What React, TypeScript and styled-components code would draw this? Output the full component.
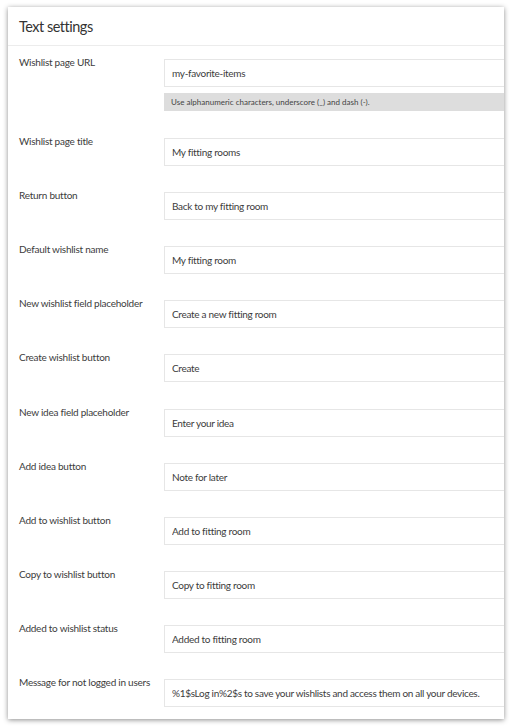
import React from "react"
import styled, { createGlobalStyle } from "styled-components"

const GlobalStyle = createGlobalStyle`
    html, body {
        margin: 0;
        padding: 0;
        background: #ffffff;
    }
    body {
        font-family: Lato, "Open Sans", sans-serif;
        color: #3c3c3c;
    }
`

type Field = {
    label: string
    value: string
    help?: string
}

const fields: Field[] = [
    {
        label: "Wishlist page URL",
        value: "my-favorite-items",
        help: "Use alphanumeric characters, underscore (_) and dash (-)."
    },
    { label: "Wishlist page title", value: "My fitting rooms" },
    { label: "Return button", value: "Back to my fitting room" },
    { label: "Default wishlist name", value: "My fitting room" },
    { label: "New wishlist field placeholder", value: "Create a new fitting room" },
    { label: "Create wishlist button", value: "Create" },
    { label: "New idea field placeholder", value: "Enter your idea" },
    { label: "Add idea button", value: "Note for later" },
    { label: "Add to wishlist button", value: "Add to fitting room" },
    { label: "Copy to wishlist button", value: "Copy to fitting room" },
    { label: "Added to wishlist status", value: "Added to fitting room" },
    {
        label: "Message for not logged in users",
        value: "%1$sLog in%2$s to save your wishlists and access them on all your devices."
    }
]

const Page = styled.div`
    padding: 7px 8px 9px 8px;
`

const Panel = styled.section`
    width: 496px;
    background: #ffffff;
    overflow: hidden;
    box-shadow: 0 1px 5px rgba(0, 0, 0, 0.45);
`

const Header = styled.header`
    height: 38px;
    display: flex;
    align-items: center;
    padding: 0 11px;
    border-bottom: 1px solid #ececec;
    font-size: 14.5px;
    letter-spacing: -0.5px;
    color: #333333;
`

const Body = styled.div`
    display: flex;
    flex-direction: column;
    gap: 22.1px;
    padding: 9px 0 12px 11px;
`

const Row = styled.div`
    display: grid;
    grid-template-columns: 145px 420px;
`

const Label = styled.label`
    font-size: 10px;
    line-height: 14px;
    letter-spacing: -0.25px;
    color: #3c3c3c;
`

const FieldCell = styled.div`
    padding-top: 4px;
    display: flex;
    flex-direction: column;
`

const TextInput = styled.input`
    box-sizing: border-box;
    height: 28px;
    width: 100%;
    margin: 0;
    padding: 0 7px;
    border: 1px solid #e6e6e6;
    border-radius: 0;
    background: #ffffff;
    font-family: inherit;
    font-size: 10px;
    letter-spacing: -0.3px;
    color: #3c3c3c;
    outline: none;
`

const Help = styled.div`
    margin: 6px 0 1px 0;
    height: 18px;
    display: flex;
    align-items: center;
    padding: 0 7px;
    background: #dddddd;
    font-size: 8px;
    color: #444444;
`

const App = () => (
    <Page>
        <GlobalStyle />
        <Panel>
            <Header>Text settings</Header>
            <Body>
                {fields.map((f) => (
                    <Row key={f.label}>
                        <Label>{f.label}</Label>
                        <FieldCell>
                            <TextInput type="text" defaultValue={f.value} />
                            {f.help && <Help>{f.help}</Help>}
                        </FieldCell>
                    </Row>
                ))}
            </Body>
        </Panel>
    </Page>
)

export default App
